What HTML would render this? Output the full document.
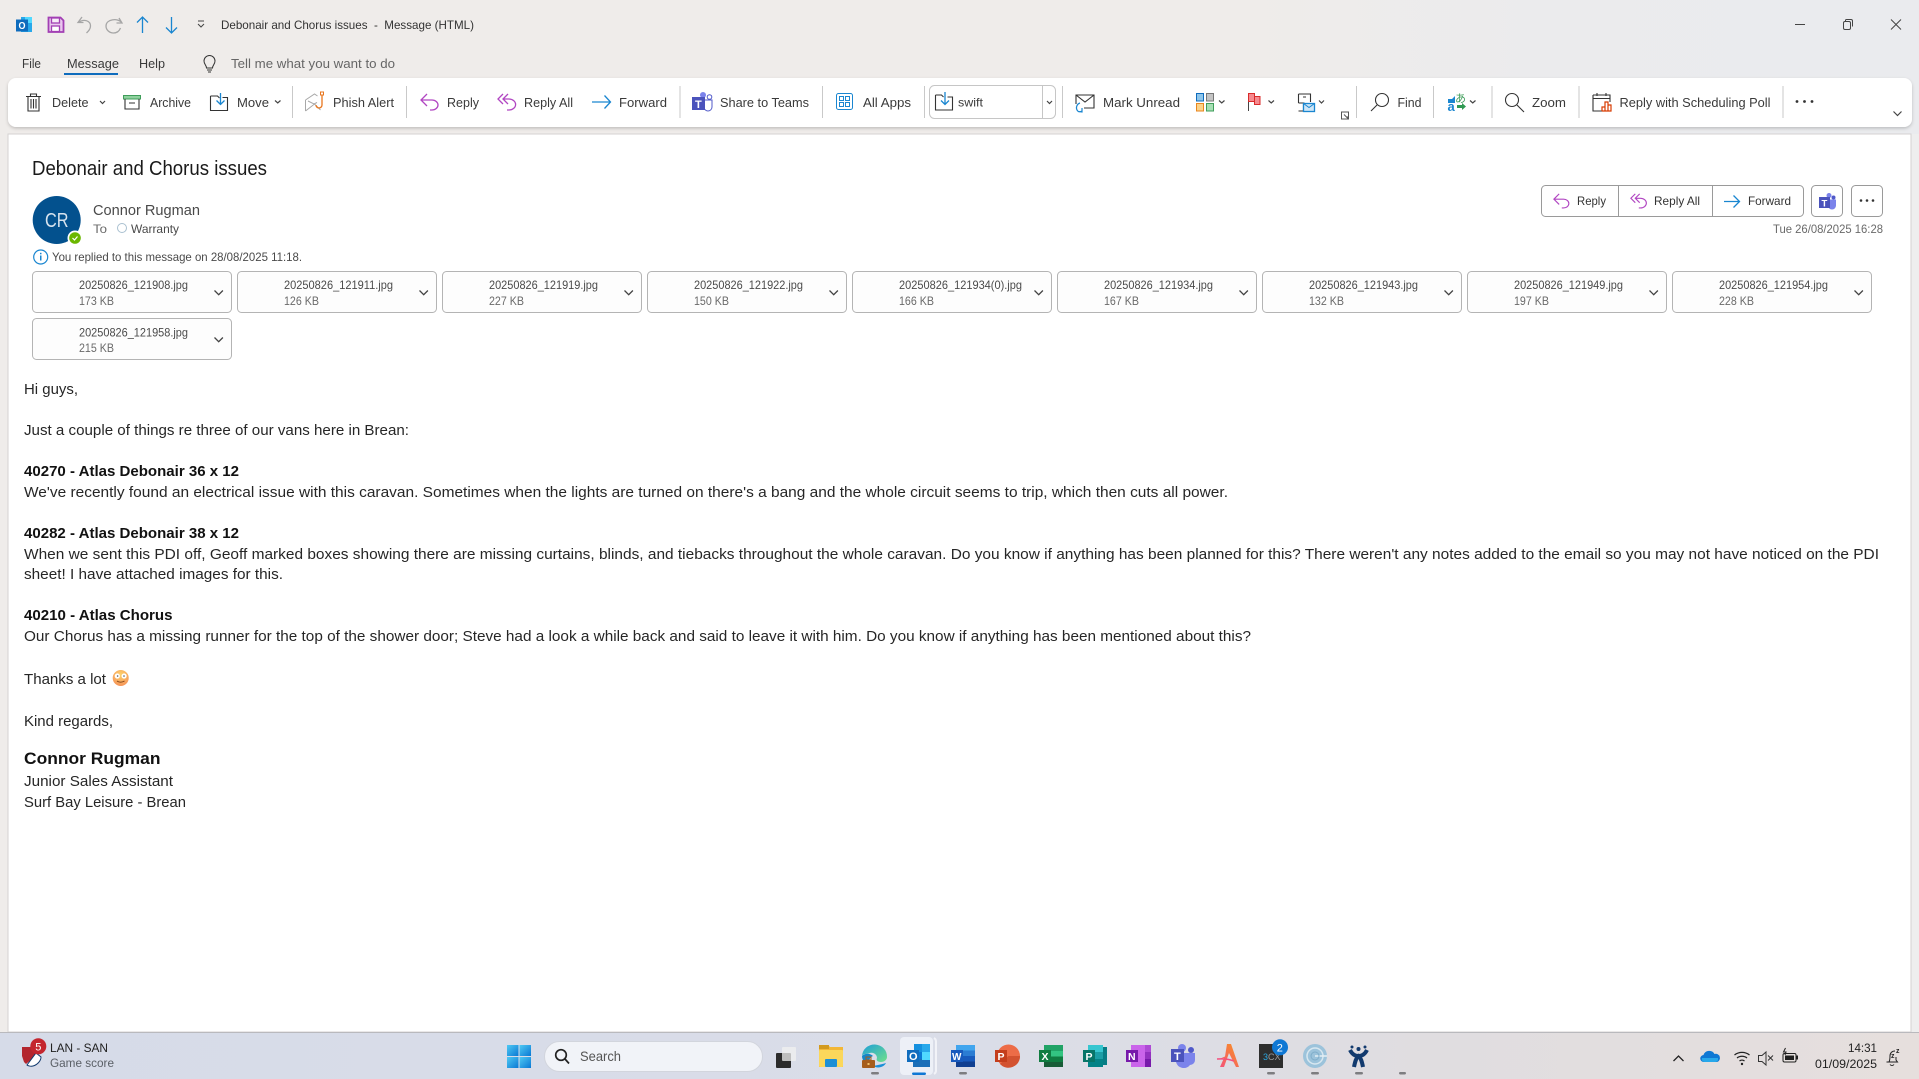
<!DOCTYPE html>
<html><head><meta charset="utf-8"><title>Debonair and Chorus issues - Message (HTML)</title>
<style>
html,body{margin:0;padding:0;background:#fff;overflow:hidden;width:1919px;height:1079px}
svg{display:block}
text{font-family:"Liberation Sans",sans-serif;fill:#3a3a3a;font-size:12.5px;white-space:pre}
.b{font-size:15px;fill:#262626}
.bb{font-size:15px;fill:#111;font-weight:bold}
.a{font-size:12px;fill:#4a4a4a}
.a2{font-size:12px;fill:#6a6a6a}
.s{fill:none;stroke:#333;stroke-width:1.1}
.p{fill:none;stroke:#b146c2;stroke-width:1.3}
.f{fill:none;stroke:#1a86d0;stroke-width:1.3}
.c{fill:none;stroke:#444;stroke-width:1.2}
.sep{stroke:#c9c9c9;stroke-width:1}
</style></head><body>
<svg xmlns="http://www.w3.org/2000/svg" width="1919" height="1079" viewBox="0 0 1919 1079">
<defs>
<linearGradient id="top" x1="0" x2="1" y1="0" y2="0"><stop offset="0" stop-color="#efecea"/><stop offset=".65" stop-color="#efecea"/><stop offset=".8" stop-color="#ebebed"/><stop offset="1" stop-color="#eaebee"/></linearGradient>
<linearGradient id="tb" x1="0" x2="1" y1="0" y2="0"><stop offset="0" stop-color="#d6dbe8"/><stop offset=".5" stop-color="#dadde8"/><stop offset=".75" stop-color="#e0dde0"/><stop offset="1" stop-color="#e6dfdd"/></linearGradient>
<radialGradient id="emo" cx=".5" cy=".3" r=".75"><stop offset="0" stop-color="#fdd36e"/><stop offset="1" stop-color="#f58f55"/></radialGradient>
<linearGradient id="win" x1="0" x2="1" y1="0" y2="1"><stop offset="0" stop-color="#4fc9f3"/><stop offset="1" stop-color="#0a78d4"/></linearGradient>
<linearGradient id="edge" x1="0" x2="1" y1="0" y2="1"><stop offset="0" stop-color="#1f9fd8"/><stop offset="1" stop-color="#6fe08a"/></linearGradient>
<linearGradient id="ac" x1="0" x2="1" y1="1" y2="0"><stop offset="0" stop-color="#f4507e"/><stop offset="1" stop-color="#f7941e"/></linearGradient>
<filter id="sh" x="-2%" y="-20%" width="104%" height="150%"><feDropShadow dx="0" dy="1.5" stdDeviation="1.5" flood-color="#000" flood-opacity=".2"/></filter>
</defs>

<rect width="1919" height="1079" fill="url(#top)"/>

<!-- title bar -->
<g>
<rect x="21" y="17" width="11" height="15" fill="#28a8ea"/><rect x="25" y="17" width="7" height="6" fill="#50d9ff"/><rect x="16" y="19.500" width="12" height="12" fill="#0f6cbd"/>
<text x="18.500" y="29" style="font-size:10px;font-weight:bold;fill:#fff" textLength="7" lengthAdjust="spacingAndGlyphs">O</text>
<path d="M48.500 17.500h12l3 3v11.500h-15z" fill="#e9c8ee" stroke="#a23fb4" stroke-width="1.800"/><rect x="51.500" y="18" width="8" height="5" fill="#f6edf7" stroke="#a23fb4" stroke-width="1.300"/><rect x="51.500" y="26" width="8" height="5.500" fill="#fff" stroke="#a23fb4" stroke-width="1.300"/>
<path d="M82 17l-4 5.500 5.500 0M78.500 22.500c5-4 12-2 12 3.500 0 3-2 5-4 7" fill="none" stroke="#a6a6a6" stroke-width="1.300"/>
<path d="M119 18l3 5-5.500 0M121 22c-3-4-15-3-15 4 0 4 3.500 7 7.500 7s6-2.500 7-5" fill="none" stroke="#a6a6a6" stroke-width="1.300"/>
<path d="M142.500 33V17M137 22.500l5.500-5.500 5.500 5.500" class="f"/>
<path d="M171.500 17V33M166 27.500l5.500 5.500 5.500-5.500" class="f"/>
<path d="M198 21h6M198 24l3 3 3-3" fill="none" stroke="#444" stroke-width="1"/>
<text x="221" y="29" style="font-size:12px;fill:#333" textLength="253" lengthAdjust="spacingAndGlyphs">Debonair and Chorus issues  -  Message (HTML)</text>
<path d="M1795 24.500h10" stroke="#444" stroke-width="1"/>
<rect x="1843.500" y="21.500" width="7" height="8" rx="1.500" fill="none" stroke="#444"/><path d="M1845.500 21.500v-1a1 1 0 0 1 1-1h4.500a1.500 1.500 0 0 1 1.500 1.500v5.500" fill="none" stroke="#444"/>
<path d="M1891 19.500l10 10M1901 19.500l-10 10" stroke="#444" stroke-width="1"/>
</g>

<!-- menu -->
<text x="22" y="68" textLength="19" lengthAdjust="spacingAndGlyphs">File</text>
<text x="67" y="68" textLength="52" lengthAdjust="spacingAndGlyphs">Message</text>
<rect x="64" y="73" width="54" height="2" fill="#0f6cbd"/>
<text x="139" y="68" textLength="26" lengthAdjust="spacingAndGlyphs">Help</text>
<path d="M206.500 68c0-3-2.500-3.500-2.500-7a5.500 5.500 0 0 1 11 0c0 3.500-2.500 4-2.500 7zM207 70h5M208 72h3" fill="none" stroke="#333" stroke-width="1"/>
<text x="231" y="68" style="fill:#666" textLength="164" lengthAdjust="spacingAndGlyphs">Tell me what you want to do</text>

<!-- pane -->
<rect x="8" y="134" width="1903" height="898" fill="#fff" stroke="#d4d2d2"/>
<rect x="1911.500" y="134" width="8" height="898" fill="#eeeeee"/>

<!-- ribbon -->
<rect x="8" y="78" width="1904" height="49" rx="8" fill="#fff" filter="url(#sh)"/>
<g>
<!-- delete -->
<path d="M26 96.500h15M30.500 96.500v-2.500h6v2.500M28 96.500v14.500h11v-14.500M31 99v9.500M33.500 99v9.500M36 99v9.500" class="s"/>
<text x="52" y="107" textLength="36.500" lengthAdjust="spacingAndGlyphs">Delete</text>
<path d="M100 101l2.500 2.500 2.500-2.500" class="c"/>
<rect x="123.500" y="95.500" width="17" height="3.500" fill="#8fd19e" stroke="#3f9d5a"/><path d="M125 99v10h14v-10M129 103h6" class="s"/>
<text x="150" y="107" textLength="41" lengthAdjust="spacingAndGlyphs">Archive</text>
<path d="M210.500 96v14.500h17v-13h-5M210.500 96h7l2 2" class="s"/><path d="M220.500 93v11M216.500 100.500l4 4 4-4" class="f"/>
<text x="237" y="107" textLength="32" lengthAdjust="spacingAndGlyphs">Move</text>
<path d="M275 100.500l2.750 2.500 2.750-2.500" class="c"/>
<line class="sep" x1="292.500" x2="292.500" y1="86" y2="118"/>
<!-- phish -->
<path d="M305.500 100l9-6 3 2M305.500 100v11M305.500 111l9-7 6 6M308 101l6 3 3-1.500" fill="none" stroke="#a8a8a8" stroke-width="1"/><path d="M322 95v10a3 3 0 0 1-6 0" fill="none" stroke="#e8761e" stroke-width="1.300"/><rect x="320.500" y="92" width="3" height="3" fill="none" stroke="#e8761e"/>
<text x="333" y="107" textLength="61" lengthAdjust="spacingAndGlyphs">Phish Alert</text>
<line class="sep" x1="406.500" x2="406.500" y1="86" y2="118"/>
<g class="p" transform="translate(420,93)"><path d="M7 1L1 7l6 6M1 7h11a6 5 0 0 1 0 10h-2"/></g>
<text x="447" y="107" textLength="32" lengthAdjust="spacingAndGlyphs">Reply</text>
<g class="p" transform="translate(497,93)"><path d="M6 1L1 6l5 5M11 1L6 6l5 5M6 6h6a6 5 0 0 1 0 11h-2"/></g>
<text x="524" y="107" textLength="49" lengthAdjust="spacingAndGlyphs">Reply All</text>
<path d="M592 102h18M604.500 95.500l6 6.500-6 6.500" class="f"/>
<text x="619" y="107" textLength="48" lengthAdjust="spacingAndGlyphs">Forward</text>
<line class="sep" x1="680" x2="680" y1="86" y2="118"/>
<!-- teams -->
<g transform="translate(692,92)"><circle cx="11" cy="3" r="3" fill="#7b83eb"/><circle cx="17.500" cy="5" r="2.300" fill="none" stroke="#5059c9"/><path d="M8 8h12v7a4 4 0 0 1-8 0" fill="#fff" stroke="#5059c9"/><rect x="0" y="5" width="13" height="13" fill="#4b53bc"/><text x="3" y="16" style="font-size:11px;font-weight:bold;fill:#fff">T</text></g>
<text x="720" y="107" textLength="89" lengthAdjust="spacingAndGlyphs">Share to Teams</text>
<line class="sep" x1="822.500" x2="822.500" y1="86" y2="118"/>
<rect x="836.500" y="93.500" width="16" height="16" rx="2" fill="none" stroke="#1a86d0"/><path d="M839.500 96.500h4v4h-4zM845.500 96.500h4v4h-4zM839.500 102.500h4v4h-4zM845.500 102.500h4v4h-4z" fill="none" stroke="#1a86d0"/>
<text x="863" y="107" textLength="48" lengthAdjust="spacingAndGlyphs">All Apps</text>
<line class="sep" x1="924.500" x2="924.500" y1="86" y2="118"/>
<rect x="929.500" y="85.500" width="126" height="33" rx="5" fill="#fff" stroke="#c6c6c6"/><line x1="1042.500" x2="1042.500" y1="86" y2="118" stroke="#c6c6c6"/>
<path d="M935.500 95v15h17v-13h-5M935.500 95h6l2 2" class="s"/><path d="M945 92v12M941 100.500l4 4 4-4" class="f"/>
<text x="958" y="106.500" style="font-size:12px" textLength="25" lengthAdjust="spacingAndGlyphs">swift</text>
<path d="M1047 101l2.500 2.500 2.500-2.500" class="c"/>
<line class="sep" x1="1062.500" x2="1062.500" y1="86" y2="118"/>
<path d="M1076 104v-9h18v13h-10M1076 95l9 7 9-7" class="s"/><path d="M1080 103a5 5 0 0 0-3 7c1 2 3 2 5 1M1082 108l0 4-4-.5" fill="none" stroke="#1a86d0" stroke-width="1.200"/>
<text x="1103" y="107" textLength="77" lengthAdjust="spacingAndGlyphs">Mark Unread</text>
<rect x="1196.500" y="93.500" width="7" height="7.500" fill="#8ec5ea" stroke="#0f6cbd"/><rect x="1206.500" y="93.500" width="7" height="7.500" fill="#c4c4c4" stroke="#777"/><rect x="1196.500" y="103.500" width="7" height="7.500" fill="#fbd38a" stroke="#e8861e"/><rect x="1206.500" y="103.500" width="7" height="7.500" fill="#a6dfb4" stroke="#3f9d5a"/>
<path d="M1219 100.500l2.750 2.500 2.750-2.500" class="c"/>
<path d="M1248.500 93.500v17.500" stroke="#444"/><rect x="1248.500" y="93.500" width="6" height="8" fill="#f58a8f" stroke="#d92b2b"/><rect x="1254.500" y="96.500" width="5.500" height="8" fill="#f58a8f" stroke="#d92b2b"/>
<path d="M1268.500 100.500l2.750 2.500 2.750-2.500" class="c"/>
<path d="M1298.500 94h12v8M1298.500 94v9M1298.500 103h6M1298.500 111h5v-7M1303 97h3" class="s"/><rect x="1303.500" y="103.500" width="11" height="8" fill="#cfe6f7" stroke="#1a86d0" stroke-width="1.300"/><path d="M1303.500 103.500l5.500 4 5.500-4" class="f" style="stroke-width:1"/>
<path d="M1319 100.500l2.500 2.500 2.500-2.500" class="c"/>
<path d="M1341.500 112h7v7h-7zM1344 114.500l4 4M1348 116v3h-3" fill="none" stroke="#555"/>
<line class="sep" x1="1356.500" x2="1356.500" y1="86" y2="118"/>
<circle cx="1382" cy="100" r="6.500" class="s"/><path d="M1377 105l-6 6" class="s"/>
<text x="1397.500" y="107" textLength="24" lengthAdjust="spacingAndGlyphs">Find</text>
<line class="sep" x1="1433.500" x2="1433.500" y1="86" y2="118"/>
<path d="M1448 99h4l3-3v7h-3l-2 0h-2z" fill="#1a86d0"/><text x="1447.500" y="111" style="font-size:13px;font-weight:bold;fill:#1a86d0">a</text>
<text x="1455" y="102" style="font-size:11px;fill:#3f9d5a;font-family:'Liberation Sans','Noto Sans CJK JP',sans-serif">あ</text><path d="M1457 105h5v-2l4 3.500-4 3.500v-2h-5z" fill="#2f9a52"/>
<path d="M1470 100.500l2.750 2.500 2.750-2.500" class="c"/>
<line class="sep" x1="1492" x2="1492" y1="86" y2="118"/>
<circle cx="1512" cy="100" r="6.500" class="s"/><path d="M1517 105l7 7" class="s"/>
<text x="1532" y="107" textLength="34" lengthAdjust="spacingAndGlyphs">Zoom</text>
<line class="sep" x1="1579" x2="1579" y1="86" y2="118"/>
<path d="M1593 95h17v7M1593 95v16h9M1593 98.500h17M1597 93v3M1606 93v3" class="s"/><path d="M1602 111v-4h3v4M1605 111v-9h3v9M1608 111v-6h3v6h-9" fill="none" stroke="#d83b01" stroke-width="1.200"/>
<text x="1619.500" y="107" textLength="151" lengthAdjust="spacingAndGlyphs">Reply with Scheduling Poll</text>
<line class="sep" x1="1783" x2="1783" y1="86" y2="118"/>
<circle cx="1797" cy="101.500" r="1.400" fill="#333"/><circle cx="1804.500" cy="101.500" r="1.400" fill="#333"/><circle cx="1812" cy="101.500" r="1.400" fill="#333"/>
<path d="M1893.500 111.500l4 4 4-4" class="c"/>
</g>

<!-- header -->
<text x="32" y="175" style="font-size:20px;fill:#1a1a1a" textLength="235" lengthAdjust="spacingAndGlyphs">Debonair and Chorus issues</text>
<circle cx="56.700" cy="220" r="24" fill="#03518e"/>
<text x="45" y="227" style="font-size:20px;fill:#d7e3ee" textLength="23.500" lengthAdjust="spacingAndGlyphs">CR</text>
<circle cx="75" cy="238" r="7.500" fill="#fff"/><circle cx="75" cy="238" r="5.800" fill="#6bb700"/><path d="M72.500 238l2 2 3-3.500" fill="none" stroke="#fff" stroke-width="1.200"/>
<text x="93" y="215" style="font-size:15px;fill:#4a4a4a" textLength="107" lengthAdjust="spacingAndGlyphs">Connor Rugman</text>
<text x="93" y="233" class="a2" textLength="14" lengthAdjust="spacingAndGlyphs">To</text>
<circle cx="122" cy="228" r="4.500" fill="#fff" stroke="#a9c0d0"/>
<text x="131" y="233" class="a" textLength="48" lengthAdjust="spacingAndGlyphs">Warranty</text>
<circle cx="40.700" cy="257" r="7" fill="#fff" stroke="#1a86d0" stroke-width="1.200"/><rect x="40" y="255.500" width="1.500" height="5" fill="#1a86d0"/><rect x="40" y="252.800" width="1.500" height="1.500" fill="#1a86d0"/>
<text x="52" y="261" class="a" textLength="250" lengthAdjust="spacingAndGlyphs">You replied to this message on 28/08/2025 11:18.</text>

<!-- right buttons -->
<rect x="1541.500" y="185.500" width="262" height="31" rx="4" fill="#fff" stroke="#9a9a9a"/>
<path d="M1618.500 186v30M1712.500 186v30" stroke="#9a9a9a"/>
<g class="p" transform="translate(1553,193) scale(.88)"><path d="M7 1L1 7l6 6M1 7h11a6 5 0 0 1 0 10h-2"/></g>
<text x="1577" y="205" style="font-size:12px;fill:#333" textLength="29" lengthAdjust="spacingAndGlyphs">Reply</text>
<g class="p" transform="translate(1630,193) scale(.88)"><path d="M6 1L1 6l5 5M11 1L6 6l5 5M6 6h6a6 5 0 0 1 0 11h-2"/></g>
<text x="1654" y="205" style="font-size:12px;fill:#333" textLength="46" lengthAdjust="spacingAndGlyphs">Reply All</text>
<path d="M1724 201.500h15M1733.500 195.500l6 6-6 6" class="f"/>
<text x="1748" y="205" style="font-size:12px;fill:#333" textLength="43" lengthAdjust="spacingAndGlyphs">Forward</text>
<rect x="1811.500" y="185.500" width="31" height="31" rx="4" fill="#fff" stroke="#9a9a9a"/>
<g transform="translate(1819,193)"><circle cx="10" cy="2.500" r="2.500" fill="#7b83eb"/><circle cx="14.500" cy="4.500" r="2" fill="#5059c9"/><path d="M7 6.500h10v6a4 4 0 0 1-8 0" fill="#7b83eb"/><rect x="0" y="4" width="11" height="11" fill="#4b53bc"/><text x="2.500" y="13.500" style="font-size:9.500px;font-weight:bold;fill:#fff">T</text></g>
<rect x="1851.500" y="185.500" width="31" height="31" rx="4" fill="#fff" stroke="#9a9a9a"/>
<circle cx="1861" cy="200.500" r="1.300" fill="#333"/><circle cx="1867" cy="200.500" r="1.300" fill="#333"/><circle cx="1873" cy="200.500" r="1.300" fill="#333"/>
<text x="1773" y="233" class="a2" textLength="110" lengthAdjust="spacingAndGlyphs">Tue 26/08/2025 16:28</text>

<!-- attachments -->
<g fill="#fdfdfd" stroke="#b4b4b4">
<rect x="32.500" y="271.500" width="199" height="41" rx="4"/><rect x="237.500" y="271.500" width="199" height="41" rx="4"/><rect x="442.500" y="271.500" width="199" height="41" rx="4"/><rect x="647.500" y="271.500" width="199" height="41" rx="4"/><rect x="852.500" y="271.500" width="199" height="41" rx="4"/><rect x="1057.500" y="271.500" width="199" height="41" rx="4"/><rect x="1262.500" y="271.500" width="199" height="41" rx="4"/><rect x="1467.500" y="271.500" width="199" height="41" rx="4"/><rect x="1672.500" y="271.500" width="199" height="41" rx="4"/>
<rect x="32.500" y="318.500" width="199" height="41" rx="4"/>
</g>
<g class="a">
<text class="a" x="79" y="289" textLength="109" lengthAdjust="spacingAndGlyphs">20250826_121908.jpg</text><text class="a2" x="79" y="305" textLength="35" lengthAdjust="spacingAndGlyphs">173 KB</text>
<text class="a" x="284" y="289" textLength="109" lengthAdjust="spacingAndGlyphs">20250826_121911.jpg</text><text class="a2" x="284" y="305" textLength="35" lengthAdjust="spacingAndGlyphs">126 KB</text>
<text class="a" x="489" y="289" textLength="109" lengthAdjust="spacingAndGlyphs">20250826_121919.jpg</text><text class="a2" x="489" y="305" textLength="35" lengthAdjust="spacingAndGlyphs">227 KB</text>
<text class="a" x="694" y="289" textLength="109" lengthAdjust="spacingAndGlyphs">20250826_121922.jpg</text><text class="a2" x="694" y="305" textLength="35" lengthAdjust="spacingAndGlyphs">150 KB</text>
<text class="a" x="899" y="289" textLength="123" lengthAdjust="spacingAndGlyphs">20250826_121934(0).jpg</text><text class="a2" x="899" y="305" textLength="35" lengthAdjust="spacingAndGlyphs">166 KB</text>
<text class="a" x="1104" y="289" textLength="109" lengthAdjust="spacingAndGlyphs">20250826_121934.jpg</text><text class="a2" x="1104" y="305" textLength="35" lengthAdjust="spacingAndGlyphs">167 KB</text>
<text class="a" x="1309" y="289" textLength="109" lengthAdjust="spacingAndGlyphs">20250826_121943.jpg</text><text class="a2" x="1309" y="305" textLength="35" lengthAdjust="spacingAndGlyphs">132 KB</text>
<text class="a" x="1514" y="289" textLength="109" lengthAdjust="spacingAndGlyphs">20250826_121949.jpg</text><text class="a2" x="1514" y="305" textLength="35" lengthAdjust="spacingAndGlyphs">197 KB</text>
<text class="a" x="1719" y="289" textLength="109" lengthAdjust="spacingAndGlyphs">20250826_121954.jpg</text><text class="a2" x="1719" y="305" textLength="35" lengthAdjust="spacingAndGlyphs">228 KB</text>
<text class="a" x="79" y="336.500" textLength="109" lengthAdjust="spacingAndGlyphs">20250826_121958.jpg</text><text class="a2" x="79" y="352" textLength="35" lengthAdjust="spacingAndGlyphs">215 KB</text>
</g>
<g class="c" style="stroke-width:1.300">
<path d="M214.500 290.500l4.200 4.200 4.200-4.200M419.500 290.500l4.200 4.200 4.200-4.200M624.500 290.500l4.200 4.200 4.200-4.200M829.500 290.500l4.200 4.200 4.200-4.200M1034.500 290.500l4.200 4.200 4.200-4.200M1239.500 290.500l4.200 4.200 4.200-4.200M1444.500 290.500l4.200 4.200 4.200-4.200M1649.500 290.500l4.200 4.200 4.200-4.200M1854.500 290.500l4.200 4.200 4.200-4.200M214.500 337.500l4.200 4.200 4.200-4.200"/>
</g>

<!-- body -->
<text class="b" x="24" y="394" textLength="54" lengthAdjust="spacingAndGlyphs">Hi guys,</text>
<text class="b" x="24" y="435" textLength="385" lengthAdjust="spacingAndGlyphs">Just a couple of things re three of our vans here in Brean:</text>
<text class="bb" x="24" y="476" textLength="215" lengthAdjust="spacingAndGlyphs">40270 - Atlas Debonair 36 x 12</text>
<text class="b" x="24" y="497" textLength="1204" lengthAdjust="spacingAndGlyphs">We've recently found an electrical issue with this caravan. Sometimes when the lights are turned on there's a bang and the whole circuit seems to trip, which then cuts all power.</text>
<text class="bb" x="24" y="538" textLength="215" lengthAdjust="spacingAndGlyphs">40282 - Atlas Debonair 38 x 12</text>
<text class="b" x="24" y="559" textLength="1855" lengthAdjust="spacingAndGlyphs">When we sent this PDI off, Geoff marked boxes showing there are missing curtains, blinds, and tiebacks throughout the whole caravan. Do you know if anything has been planned for this? There weren't any notes added to the email so you may not have noticed on the PDI</text>
<text class="b" x="24" y="579" textLength="259" lengthAdjust="spacingAndGlyphs">sheet! I have attached images for this.</text>
<text class="bb" x="24" y="620" textLength="148.500" lengthAdjust="spacingAndGlyphs">40210 - Atlas Chorus</text>
<text class="b" x="24" y="641" textLength="1227" lengthAdjust="spacingAndGlyphs">Our Chorus has a missing runner for the top of the shower door; Steve had a look a while back and said to leave it with him. Do you know if anything has been mentioned about this?</text>
<text class="b" x="24" y="684" textLength="82" lengthAdjust="spacingAndGlyphs">Thanks a lot</text>
<circle cx="120.700" cy="678" r="8" fill="url(#emo)"/><circle cx="117.300" cy="676" r="2.600" fill="#fff"/><circle cx="124.100" cy="676" r="2.600" fill="#fff"/><circle cx="117.600" cy="676" r=".8" fill="#555"/><circle cx="124" cy="676" r=".8" fill="#555"/><path d="M117 681c2 1.500 5 1.500 7.500 0" fill="none" stroke="#7a3f18" stroke-width=".9"/>
<text class="b" x="24" y="726" textLength="89" lengthAdjust="spacingAndGlyphs">Kind regards,</text>
<text x="24" y="764" style="font-size:17px;font-weight:bold;fill:#111" textLength="136.500" lengthAdjust="spacingAndGlyphs">Connor Rugman</text>
<text class="b" x="24" y="786" textLength="149" lengthAdjust="spacingAndGlyphs">Junior Sales Assistant</text>
<text class="b" x="24" y="807" textLength="162" lengthAdjust="spacingAndGlyphs">Surf Bay Leisure - Brean</text>

<!-- taskbar -->
<rect x="0" y="1032" width="1919" height="47" fill="url(#tb)"/>
<line x1="0" x2="1919" y1="1032.500" y2="1032.500" stroke="#b9b9bd"/>
<path d="M22 1047h13v10l-3 2-6 5-2-2-2-6z" fill="#b3262e"/><path d="M27 1065l9-12 5 4c0 4-4 8-8 9-2 .5-5 0-6-1z" fill="#fff" stroke="#123a6e"/>
<circle cx="38.300" cy="1046.300" r="8" fill="#c4262e"/>
<text x="35.300" y="1050.500" style="font-size:11px;fill:#fff">5</text>
<text x="50" y="1052" style="font-size:12px;fill:#222" textLength="58" lengthAdjust="spacingAndGlyphs">LAN - SAN</text>
<text x="50" y="1067" style="font-size:12px;fill:#5a5f66" textLength="64" lengthAdjust="spacingAndGlyphs">Game score</text>

<g fill="url(#win)"><rect x="507" y="1045" width="11.500" height="11"/><rect x="519.500" y="1045" width="11.500" height="11"/><rect x="507" y="1057" width="11.500" height="11"/><rect x="519.500" y="1057" width="11.500" height="11"/></g>
<rect x="544.500" y="1041.500" width="218" height="30" rx="15" fill="#f1f3f8" stroke="#d2d5dd"/>
<circle cx="561" cy="1055" r="5.300" fill="none" stroke="#222" stroke-width="1.700"/><path d="M565 1059l4 4.500" stroke="#222" stroke-width="1.700"/>
<text x="580" y="1061" style="font-size:14px;fill:#555" textLength="41" lengthAdjust="spacingAndGlyphs">Search</text>
<rect x="776" y="1053" width="15" height="15" rx="1" fill="#2b2b2b"/><rect x="782" y="1047" width="14" height="14" rx="1" fill="#f0f0f0" fill-opacity=".75"/>

<!-- explorer -->
<path d="M819 1045h9l2 2h13v20h-24z" fill="#f3b735"/><rect x="819" y="1045" width="10" height="4" fill="#d39a1e"/><rect x="819" y="1050" width="24" height="17" rx="1" fill="#fbd75b"/><rect x="825" y="1059" width="12" height="8" rx="1" fill="#1c8fd6"/>
<!-- edge -->
<path d="M862 1056a12.500 12 0 0 1 25 1c0 3-3 5-6 5-4 0-5-2-4-4 0-3-3-6-7-5s-7 1-8 3z" fill="url(#edge)"/><path d="M862 1056c3-3 8-3 11 0-3 1-5 5-4 9-4-1-7-5-7-9z" fill="#1587c9"/><path d="M873 1066c5 3 11 1 13-3-3 1-8 2-13 3z" fill="#1c8fd6"/>
<rect x="862" y="1060" width="13" height="8" rx="1" fill="#a65d1c"/><rect x="866" y="1057" width="5" height="3" fill="none" stroke="#a65d1c"/><rect x="867.500" y="1063" width="2" height="2" fill="#f0c26e"/>
<!-- outlook active -->
<rect x="900" y="1037" width="33" height="38" rx="4" fill="#edf0f7"/><path d="M934 1038a4 4 0 0 1 2 3v30a4 4 0 0 1-2 3" fill="none" stroke="#f2f3f8" stroke-width="2"/>
<rect x="913" y="1050" width="17" height="17" fill="#1c6fb8"/><rect x="914" y="1044" width="8" height="8" fill="#1490df"/><rect x="922" y="1044" width="8" height="8" fill="#28a8ea"/><rect x="922" y="1052" width="8" height="8" fill="#50d9ff"/><rect x="914" y="1052" width="8" height="7" fill="#0a78d4"/>
<rect x="907" y="1050" width="12" height="12" fill="#0f6cbd"/><text x="909" y="1060" style="font-size:11px;font-weight:bold;fill:#fff">O</text>
<rect x="912" y="1072.500" width="14" height="2.500" rx="1.200" fill="#0f78d4"/>
<!-- word -->
<rect x="956" y="1045" width="19" height="5.500" fill="#41a5ee"/><rect x="956" y="1050.500" width="19" height="5.500" fill="#2b7cd3"/><rect x="956" y="1056" width="19" height="5.500" fill="#185abd"/><rect x="956" y="1061.500" width="19" height="5.500" fill="#103f91"/>
<rect x="951" y="1050" width="12" height="12" fill="#185abd"/><text x="952" y="1060" style="font-size:10px;font-weight:bold;fill:#fff">W</text>
<!-- ppt -->
<circle cx="1008.500" cy="1056" r="11.500" fill="#ed6c47"/><path d="M1008.500 1056h11.500a11.500 11.500 0 0 1-20 8z" fill="#d35230"/><rect x="995" y="1050" width="12" height="12" fill="#c43e1c"/><text x="997.500" y="1060" style="font-size:10.500px;font-weight:bold;fill:#fff">P</text>
<!-- excel -->
<rect x="1044" y="1045" width="19" height="6" fill="#21a366"/><rect x="1044" y="1051" width="19" height="5.500" fill="#33c481"/><rect x="1044" y="1056.500" width="19" height="5.500" fill="#107c41"/><rect x="1044" y="1062" width="19" height="5" fill="#185c37"/>
<rect x="1039" y="1050" width="12" height="12" fill="#107c41"/><text x="1041.500" y="1060" style="font-size:10.500px;font-weight:bold;fill:#fff">X</text>
<!-- publisher -->
<rect x="1088" y="1045" width="15" height="7" fill="#37c6d0"/><rect x="1088" y="1052" width="15" height="7" fill="#1b9ea6"/><rect x="1088" y="1059" width="15" height="8" fill="#038387"/><rect x="1103" y="1047" width="4" height="18" fill="#077d85"/>
<rect x="1083" y="1050" width="12" height="12" fill="#077568"/><text x="1085.500" y="1060" style="font-size:10.500px;font-weight:bold;fill:#fff">P</text>
<!-- onenote -->
<rect x="1131" y="1045" width="20" height="22" fill="#ca64ea"/><rect x="1145" y="1045" width="6" height="7" fill="#ae4bd5"/><rect x="1145" y="1052" width="6" height="7" fill="#9332bf"/><rect x="1145" y="1059" width="6" height="8" fill="#7719aa"/>
<rect x="1126" y="1050" width="12" height="12" fill="#7719aa"/><text x="1128" y="1060" style="font-size:10.500px;font-weight:bold;fill:#fff">N</text>
<!-- teams -->
<circle cx="1182" cy="1048" r="4" fill="#7b83eb"/><circle cx="1191" cy="1050" r="3" fill="#5059c9"/><path d="M1176 1053h19v7a5 5 0 0 1-5 5 8 8 0 0 1-14-3z" fill="#7b83eb"/><rect x="1171" y="1049" width="13" height="13" fill="#4b53bc"/><text x="1174" y="1060" style="font-size:11px;font-weight:bold;fill:#fff">T</text>
<!-- acrobat-like -->
<path d="M1227 1044h4l8 23h-3l-7-14-5 14-4 0 4-9-6 1.500 7-3z" fill="url(#ac)"/>
<path d="M1217 1059c6-.5 12 0 17 2" fill="none" stroke="#f4507e" stroke-width="1.500"/>
<!-- 3cx -->
<rect x="1259" y="1044" width="24" height="24" fill="#2e2e2e"/><text x="1263" y="1060" style="font-size:9px;fill:#2aa7e0">3</text><text x="1268" y="1060" style="font-size:9px;fill:#999">CX</text>
<circle cx="1280" cy="1047.300" r="8" fill="#0f78d4"/><text x="1276.800" y="1051.500" style="font-size:11px;fill:#fff">2</text>
<!-- globe -->
<circle cx="1315" cy="1056" r="12" fill="#9cc3db"/><circle cx="1315" cy="1056" r="8" fill="none" stroke="#d8e7f0" stroke-width="1.500"/><path d="M1315 1056h12" stroke="#e4eff5" stroke-width="1.500"/><circle cx="1315" cy="1056" r="4" fill="none" stroke="#7fadca"/>
<!-- atlassian-like -->
<circle cx="1358.500" cy="1049" r="2" fill="#123a6e"/><circle cx="1352" cy="1047" r="1.500" fill="#123a6e"/><circle cx="1365" cy="1047" r="1.500" fill="#123a6e"/>
<path d="M1350 1050c2 4 5 6 8.500 6s6.500-2 8.500-6M1354 1067c1-5 2-9 4.500-11 2.500 2 3.500 6 4.500 11" fill="none" stroke="#123a6e" stroke-width="4"/>
<g fill="#7d7d80"><rect x="871" y="1072" width="8" height="2.500" rx="1.200"/><rect x="959" y="1072" width="8" height="2.500" rx="1.200"/><rect x="1267" y="1072" width="8" height="2.500" rx="1.200"/><rect x="1311" y="1072" width="8" height="2.500" rx="1.200"/><rect x="1355" y="1072" width="8" height="2.500" rx="1.200"/><rect x="1399" y="1072" width="7" height="2.500" rx="1.200"/></g>

<!-- tray -->
<path d="M1673.500 1061l5-5 5 5" fill="none" stroke="#222" stroke-width="1.300"/>
<path d="M1706 1062h-2a3.500 3.500 0 0 1-.5-7 6 6 0 0 1 11-1 4 4 0 0 1 2.500 8z" fill="#0f78d4"/><path d="M1702 1058h16v1.500a2.500 2.500 0 0 1-2.500 2.500h-11a3 3 0 0 1-2.500-4z" fill="#28a8ea"/>
<path d="M1734.500 1055a12 12 0 0 1 15 0M1737 1058a8 8 0 0 1 10 0M1739.500 1061a4 4 0 0 1 5 0" fill="none" stroke="#222" stroke-width="1.200"/><circle cx="1742" cy="1064" r="1.200" fill="#222"/>
<path d="M1758.500 1055.500h3.500l4-3.500v13l-4-3.500h-3.500zM1768 1055.500l5 5M1773 1055.500l-5 5" fill="none" stroke="#333"/>
<rect x="1783" y="1053.500" width="13" height="8.500" rx="1.500" fill="#e6e0de" stroke="#1f1f1f"/><rect x="1785" y="1055.500" width="9" height="4.500" fill="#1f1f1f"/><rect x="1796.500" y="1055.500" width="1.500" height="4" fill="#1f1f1f"/><path d="M1785.500 1048l-2 4h2.500l-1 3" fill="none" stroke="#1f1f1f"/>
<text x="1848" y="1052" style="font-size:12px;fill:#222" textLength="29" lengthAdjust="spacingAndGlyphs">14:31</text>
<text x="1815" y="1068" style="font-size:12px;fill:#222" textLength="62" lengthAdjust="spacingAndGlyphs">01/09/2025</text>
<path d="M1889 1062c1-2 1-4 1-6 0-3 2-5 5-5M1886.500 1062h11l-1.500-2v-3M1890 1064.500a2.500 2.500 0 0 0 4 0" fill="none" stroke="#222"/>
<text x="1891" y="1058" style="font-size:7px;font-weight:bold;fill:#222">z</text><text x="1896" y="1053" style="font-size:7px;font-weight:bold;fill:#222">z</text>
</svg>
</body></html>
